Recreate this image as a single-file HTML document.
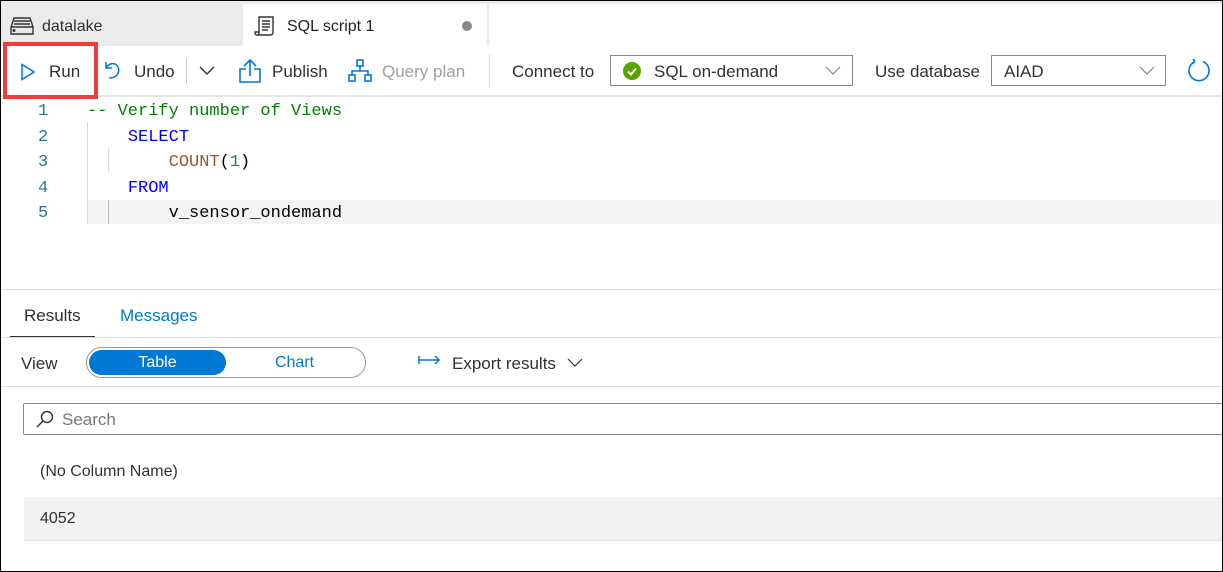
<!DOCTYPE html>
<html><head><style>
*{margin:0;padding:0;box-sizing:border-box}
body{width:1223px;height:572px;position:relative;overflow:hidden;background:#fff;font-family:"Liberation Sans",sans-serif;color:#323130}
.a{position:absolute}
.t{font-size:17px;white-space:nowrap}
.mono{font-family:"Liberation Mono",monospace;font-size:17px;white-space:pre;position:absolute}
</style></head><body>
<div class="a" style="left:0;top:0;width:1223px;height:572px;border:1px solid #000;z-index:10;pointer-events:none"></div>
<div class="a" style="left:0;top:0;width:1223px;height:46px;background:#ebebeb"></div>
<div class="a" style="left:243px;top:4px;width:244px;height:42px;background:#fff"></div>
<div class="a" style="left:489px;top:4px;width:734px;height:42px;background:#fff"></div>
<svg class="a" style="left:10px;top:17px" width="24" height="18" viewBox="0 0 24 18" fill="none" stroke="#333" stroke-width="1.4"><path d="M4 1h16l3 9v7H1v-7z M1 10h22 M4 4h16 M4 7h16"/><circle cx="4" cy="13.5" r="0.8" fill="#333"/></svg>
<div class="a t" style="left:42px;top:18px;font-size:16px">datalake</div>
<svg class="a" style="left:254px;top:15px" width="22" height="22" viewBox="0 0 22 22" fill="none" stroke="#333" stroke-width="1.4"><path d="M5 2h14v15c0 2-1 3-3 3H3c2 0 2-1 2-3z M8 6h8 M8 9h8 M8 12h8 M8 15h6 M3 20c-1.5 0-2-1-2-3h4"/></svg>
<div class="a t" style="left:287px;top:18px;font-size:16px;color:#222">SQL script 1</div>
<div class="a" style="left:462px;top:21px;width:10px;height:10px;border-radius:50%;background:#888"></div>
<div class="a" style="left:0;top:95px;width:1223px;height:2px;background:#e6e6e6"></div>
<div class="a" style="left:3px;top:42px;width:95px;height:57px;border:4px solid #f03c3c;z-index:5"></div>
<svg class="a" style="left:20px;top:63px" width="16" height="18" viewBox="0 0 16 18" fill="none" stroke="#0078d4" stroke-width="1.5"><path d="M2 1.5l12 7.5-12 7.5z"/></svg>
<div class="a t" style="left:49px;top:62px">Run</div>
<svg class="a" style="left:103px;top:60px" width="20" height="22" viewBox="0 0 20 22" fill="none" stroke="#0078d4" stroke-width="1.5"><path d="M3 2v6h6 M3 8c2-4 6-5 9-4 4 2 5 7 2 11-2 2-5 3-8 3"/></svg>
<div class="a t" style="left:134px;top:62px">Undo</div>
<div class="a" style="left:186px;top:58px;width:1px;height:26px;background:#ccc"></div>
<svg class="a" style="left:199px;top:66px" width="16" height="10" viewBox="0 0 16 10" fill="none" stroke="#333" stroke-width="1.4"><path d="M1 1l7 7 7-7"/></svg>
<svg class="a" style="left:238px;top:58px" width="24" height="26" viewBox="0 0 24 26" fill="none" stroke="#0078d4" stroke-width="1.6"><path d="M12 18V2 M6 8l6-6 6 6 M8 11H2v13h20V11h-6"/></svg>
<div class="a t" style="left:272px;top:62px">Publish</div>
<svg class="a" style="left:348px;top:59px" width="24" height="24" viewBox="0 0 24 24" fill="none" stroke="#0078d4" stroke-width="1.6"><rect x="9" y="1" width="6" height="6"/><rect x="1" y="16" width="6" height="6"/><rect x="17" y="16" width="6" height="6"/><path d="M12 7v5 M4 16v-4h16v4"/></svg>
<div class="a t" style="left:382px;top:62px;color:#a19f9d">Query plan</div>
<div class="a" style="left:489px;top:54px;width:1px;height:34px;background:#ddd"></div>
<div class="a t" style="left:512px;top:62px">Connect to</div>
<div class="a" style="left:610px;top:55px;width:243px;height:31px;border:1px solid #8a8886"></div>
<div class="a" style="left:623px;top:62px;width:18px;height:18px;border-radius:50%;background:#57a300"></div>
<svg class="a" style="left:623px;top:62px" width="18" height="18" viewBox="0 0 18 18" fill="none" stroke="#fff" stroke-width="2"><path d="M5 9.5l3 3 5-6"/></svg>
<div class="a t" style="left:654px;top:62px">SQL on-demand</div>
<svg class="a" style="left:825px;top:66px" width="16" height="10" viewBox="0 0 16 10" fill="none" stroke="#888" stroke-width="1.2"><path d="M1 1l7 7 7-7"/></svg>
<div class="a t" style="left:875px;top:62px">Use database</div>
<div class="a" style="left:991px;top:55px;width:175px;height:31px;border:1px solid #8a8886"></div>
<div class="a t" style="left:1004px;top:62px">AIAD</div>
<svg class="a" style="left:1139px;top:66px" width="16" height="10" viewBox="0 0 16 10" fill="none" stroke="#888" stroke-width="1.2"><path d="M1 1l7 7 7-7"/></svg>
<svg class="a" style="left:1186px;top:58px" width="26" height="26" viewBox="0 0 26 26" fill="none" stroke="#0078d4" stroke-width="1.6"><path d="M9 3.5A10 10 0 1 0 17 3.5 M9 3.5L7 1 M9 3.5L6 6"/></svg>
<div class="a" style="left:87px;top:200px;width:1136px;height:24px;background:#f4f4f4"></div>
<div class="a" style="left:87px;top:122px;width:1px;height:102px;background:#d8d8d8"></div>
<div class="a" style="left:108px;top:148px;width:1px;height:24px;background:#d8d8d8"></div>
<div class="a" style="left:108px;top:200px;width:1px;height:24px;background:#bbb"></div>
<div class="mono" style="left:38px;top:99px;color:#237893;line-height:25.5px">1
2
3
4
5</div>
<div class="mono" style="left:87px;top:99px;line-height:25.5px;color:#000"><span style="color:#008000">-- Verify number of Views</span>
    <span style="color:#0000ff">SELECT</span>
        <span style="color:#a0522d">COUNT</span>(<span style="color:#09885a">1</span>)
    <span style="color:#0000ff">FROM</span>
        v_sensor_ondemand</div>
<div class="a" style="left:0;top:289px;width:1223px;height:1px;background:#ddd"></div>
<div class="a t" style="left:24px;top:306px">Results</div>
<div class="a t" style="left:120px;top:306px;color:#0078d4">Messages</div>
<div class="a" style="left:10px;top:336px;width:85px;height:2px;background:#333"></div>
<div class="a" style="left:0;top:337px;width:1223px;height:1px;background:#ddd"></div>
<div class="a t" style="left:21px;top:354px">View</div>
<div class="a" style="left:86px;top:347px;width:280px;height:31px;border:1px solid #999;border-radius:16px"></div>
<div class="a" style="left:89px;top:350px;width:137px;height:25px;border-radius:13px;background:#0078d4"></div>
<div class="a" style="left:89px;top:354px;width:137px;text-align:center;color:#fff;font-size:16px">Table</div>
<div class="a" style="left:226px;top:354px;width:137px;text-align:center;color:#0078d4;font-size:16px">Chart</div>
<svg class="a" style="left:418px;top:355px" width="24" height="12" viewBox="0 0 24 12" fill="none" stroke="#0078d4" stroke-width="1.5"><path d="M1 1v8 M1 5h20 M17 1l4 4-4 4"/></svg>
<div class="a t" style="left:452px;top:354px">Export results</div>
<svg class="a" style="left:567px;top:358px" width="16" height="10" viewBox="0 0 16 10" fill="none" stroke="#333" stroke-width="1.2"><path d="M1 1l7 7 7-7"/></svg>
<div class="a" style="left:0;top:386px;width:1223px;height:1px;background:#ddd"></div>
<div class="a" style="left:23px;top:403px;width:1205px;height:32px;border:1px solid #8a8886;border-radius:2px"></div>
<svg class="a" style="left:35px;top:409px" width="20" height="20" viewBox="0 0 20 20" fill="none" stroke="#333" stroke-width="1.4"><circle cx="12" cy="8" r="5.5"/><path d="M8 12l-6 6"/></svg>
<div class="a t" style="left:62px;top:410px;color:#777">Search</div>
<div class="a t" style="left:40px;top:463px;font-size:16px">(No Column Name)</div>
<div class="a" style="left:24px;top:497px;width:1199px;height:44px;background:#f3f2f1;border-bottom:1px solid #dde3ea"></div>
<div class="a t" style="left:40px;top:510px;font-size:16px">4052</div>
</body></html>
